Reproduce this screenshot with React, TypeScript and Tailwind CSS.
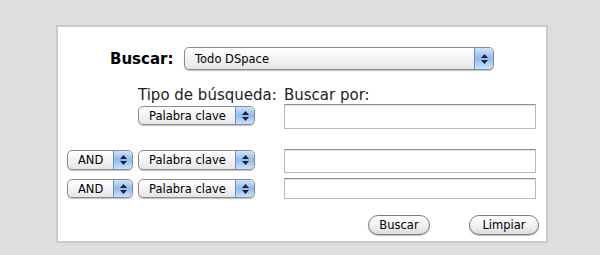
import React from 'react';

const font = "font-['DejaVu_Sans',Verdana,sans-serif]";

const Stepper = () => (
  <div className="flex h-full w-[19px] shrink-0 flex-col items-center justify-center gap-[2px] rounded-r-[5px] border-l border-[#6d8fc4] bg-gradient-to-b from-[#cfe3fb] via-[#8fbaf0] to-[#c9e2fd]">
    <svg width="7" height="4" viewBox="0 0 7 4">
      <path d="M3.5 0 L7 4 L0 4 Z" fill="#1d2430" />
    </svg>
    <svg width="7" height="4" viewBox="0 0 7 4">
      <path d="M0 0 L7 0 L3.5 4 Z" fill="#1d2430" />
    </svg>
  </div>
);

const Select = ({ label, className }: { label: string; className: string }) => (
  <div
    className={`flex items-center overflow-hidden rounded-[5px] border border-[#8b8b8b] bg-gradient-to-b from-white via-[#f3f3f3] to-[#e6e6e6] shadow-[0_1px_1px_rgba(0,0,0,0.25)] ${className}`}
  >
    <span className="flex-1 whitespace-nowrap pl-[10px] text-[11.5px] leading-[14px] text-black">{label}</span>
    <Stepper />
  </div>
);

const TextInput = ({ className }: { className: string }) => (
  <div
    className={`w-[252px] border border-[#b9b9b9] border-t-[#8e8e8e] bg-white shadow-[inset_0_1px_1px_rgba(0,0,0,0.12)] ${className}`}
  />
);

const Button = ({ label, className }: { label: string; className: string }) => (
  <div
    className={`flex h-[20px] items-center justify-center rounded-full border border-[#7a7a7a] bg-gradient-to-b from-white via-[#f2f2f2] to-[#dcdcdc] text-[11.5px] leading-[14px] text-black shadow-[0_1px_1px_rgba(0,0,0,0.25)] ${className}`}
  >
    {label}
  </div>
);

export default function App() {
  return (
    <div className={`h-[255px] w-[600px] bg-[#dedede] pl-[56px] pt-[25px] ${font}`}>
      <div className="h-[218px] w-[492px] border-2 border-[#cacaca] bg-white">
        {/* scope row */}
        <div className="mt-[20px] flex items-center">
          <span className="ml-[52px] w-[70px] text-[15px] font-bold leading-[18px] text-black">Buscar:</span>
          <Select label="Todo DSpace" className="ml-[4px] h-[23px] w-[310px]" />
        </div>

        {/* headers */}
        <div className="mt-[17px] flex text-[15px] leading-[17px] text-[#222]">
          <span className="ml-[80px] w-[146px] whitespace-nowrap">Tipo de búsqueda:</span>
          <span>Buscar por:</span>
        </div>

        {/* row 1 */}
        <div className="flex items-start">
          <Select label="Palabra clave" className="ml-[80px] mt-[2px] h-[19px] w-[117px]" />
          <TextInput className="ml-[29px] h-[25px]" />
        </div>

        {/* row 2 */}
        <div className="mt-[20px] flex items-start">
          <Select label="AND" className="ml-[9px] mt-[1px] h-[20px] w-[66px]" />
          <Select label="Palabra clave" className="ml-[5px] mt-[1px] h-[20px] w-[117px]" />
          <TextInput className="ml-[29px] h-[24px]" />
        </div>

        {/* row 3 */}
        <div className="mt-[5px] flex items-start">
          <Select label="AND" className="ml-[9px] mt-[1px] h-[19px] w-[66px]" />
          <Select label="Palabra clave" className="ml-[5px] mt-[1px] h-[19px] w-[117px]" />
          <TextInput className="ml-[29px] h-[21px]" />
        </div>

        {/* actions */}
        <div className="mt-[16px] flex">
          <Button label="Buscar" className="ml-[310px] w-[62px]" />
          <Button label="Limpiar" className="ml-[39px] w-[70px]" />
        </div>
      </div>
    </div>
  );
}
